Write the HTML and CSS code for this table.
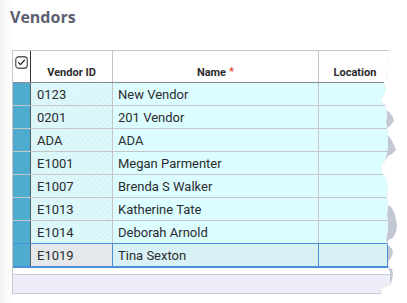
FILE: index.html
```html
<!DOCTYPE html>
<html>
<head>
<meta charset="utf-8">
<link rel="stylesheet" href="styles.css">
</head>
<body>
<h1 class="title">Vendors</h1>
<div class="paper">
  <div class="sheet">
    <div class="row head">
      <div class="c mark"><svg class="chk" width="13" height="13" viewBox="0 0 13 13"><rect x="0.75" y="0.75" width="11.5" height="11.5" rx="3" fill="#fff" stroke="#555a60" stroke-width="1.3"/><path d="M3.6 6.6 L5.5 8.6 L9.4 4.2" fill="none" stroke="#2a2a2a" stroke-width="1.3" stroke-linecap="round" stroke-linejoin="round"/></svg></div>
      <div class="c id">Vendor ID</div>
      <div class="c name">Name<span class="req">*</span></div>
      <div class="c loc">Location</div>
    </div>
    <div class="row"><div class="c mark"></div><div class="c id">0123</div><div class="c name">New Vendor</div><div class="c loc"></div></div>
    <div class="row"><div class="c mark"></div><div class="c id">0201</div><div class="c name">201 Vendor</div><div class="c loc"></div></div>
    <div class="row"><div class="c mark"></div><div class="c id">ADA</div><div class="c name">ADA</div><div class="c loc"></div></div>
    <div class="row"><div class="c mark"></div><div class="c id">E1001</div><div class="c name">Megan Parmenter</div><div class="c loc"></div></div>
    <div class="row"><div class="c mark"></div><div class="c id">E1007</div><div class="c name">Brenda S Walker</div><div class="c loc"></div></div>
    <div class="row"><div class="c mark"></div><div class="c id">E1013</div><div class="c name">Katherine Tate</div><div class="c loc"></div></div>
    <div class="row"><div class="c mark"></div><div class="c id">E1014</div><div class="c name">Deborah Arnold</div><div class="c loc"></div></div>
    <div class="row sel"><div class="c mark"></div><div class="c id">E1019</div><div class="c name">Tina Sexton</div><div class="c loc"></div></div>
    <div class="gap"></div>
    <div class="foot"></div>
  </div>
</div>
</body>
</html>
```
FILE: styles.css
```css
html, body {
  margin: 0;
  padding: 0;
}
body {
  width: 407px;
  height: 303px;
  overflow: hidden;
  background: linear-gradient(to right, #f1f1f3 0, #fafafa 7px, #ffffff 11px);
  font-family: Roboto, "Liberation Sans", sans-serif;
  color: #2a2c30;
}
.title {
  margin: 0;
  padding: 7px 0 0 10px;
  height: 20px;
  font: 700 16px/20px "Open Sans", sans-serif;
  color: #5b6070;
}
.paper {
  margin: 23px 0 0 12px;
  width: 390px;
  height: 244px;
  background: #c3c7d3;
  clip-path: polygon(0 0, 377px 0, 377px 2px, 376px 3px, 374px 32px, 372px 32px, 373px 36px, 374px 40px, 372px 45px, 369px 49px, 370px 52px, 373px 55px, 374px 60px, 377px 62px, 381px 67px, 382px 71px, 378px 76px, 375px 78px, 376px 85px, 379px 89px, 382px 95px, 384px 100px, 380px 104px, 376px 106px, 375px 108px, 371px 113px, 369px 118px, 370px 123px, 373px 126px, 375px 132px, 376px 140px, 375px 147px, 376px 155px, 380px 158px, 383px 165px, 385px 175px, 384px 182px, 381px 188px, 376px 190px, 376px 195px, 380px 199px, 381px 203px, 379px 208px, 376px 212px, 377px 218px, 380px 219px, 381px 224px, 380px 230px, 378px 235px, 370px 238px, 369px 244px, 0 244px);
}
.sheet {
  box-sizing: border-box;
  width: 379px;
  height: 244px;
  background: #ffffff;
  border-left: 1px solid #c3c6cf;
  border-top: 1px solid #c3c6cf;
  clip-path: polygon(0 0, 377px 0, 377px 1px, 374px 32px, 372px 32px, 373px 36px, 374px 40px, 372px 45px, 369px 49px, 370px 52px, 373px 55px, 374px 60px, 375px 65px, 374px 72px, 375px 78px, 376px 85px, 376px 95px, 375px 102px, 374px 108px, 371px 113px, 369px 118px, 370px 123px, 373px 126px, 375px 132px, 376px 140px, 375px 147px, 376px 155px, 375px 165px, 376px 175px, 375px 185px, 374px 190px, 376px 195px, 376px 218px, 378px 222px, 378px 235px, 370px 238px, 369px 244px, 0 244px);
}
.row {
  display: grid;
  grid-template-columns: 18px 82px 206px 72px;
  box-sizing: border-box;
  height: 23px;
  border-bottom: 1px solid #c6c6c8;
  font-size: 13px;
}
.c {
  box-sizing: border-box;
  display: flex;
  align-items: center;
  border-right: 1px solid #c6c6c8;
  white-space: nowrap;
  overflow: hidden;
}
.mark {
  background: #4eaccf;
  border-right: 1px solid #5b5e62;
}
.id {
  padding-left: 6px;
  background-color: #def9fb;
  background-image:
    repeating-linear-gradient(45deg, rgba(120, 170, 180, 0.05) 0 1px, transparent 1px 4px),
    repeating-linear-gradient(-45deg, rgba(120, 170, 180, 0.05) 0 1px, transparent 1px 4px);
}
.name {
  padding-left: 5px;
  background: #dcfdff;
}
.loc {
  background: #dcfdff;
  border-right: none;
}
.head {
  height: 32px;
  border-bottom: 1px solid #8c8c8e;
  font: 700 11px Roboto, "Liberation Sans", sans-serif;
  color: #2b2b2d;
}
.head .c {
  background: #ffffff;
  align-items: flex-end;
  justify-content: center;
  padding: 0 0 3px 0;
}
.head .mark {
  border-right: 1px solid #2e2e30;
  align-items: flex-start;
  padding: 5px 0 0 0;
}
.chk {
  display: block;
}
.req {
  color: #e8452c;
  margin-left: 3px;
  position: relative;
  top: -1px;
}
.sel {
  height: 24px;
  border-bottom: 2px solid #4a8fd8;
  box-shadow: 0 -1px 0 #4a8fd8;
}
.sel .id {
  background: #e4e8eb;
  border-right-color: #4a8fd8;
}
.sel .name {
  background: #d8f1f6;
  border-right-color: #4a8fd8;
}
.sel .loc {
  background: #d8f1f6;
  box-shadow: inset -4px 0 0 #4a8fd8;
}
.gap {
  height: 6px;
}
.foot {
  box-sizing: border-box;
  height: 20px;
  background: #ecedf7;
  border-top: 1px solid #c8cbd9;
  border-bottom: 1px solid #c8cbd9;
}
```
